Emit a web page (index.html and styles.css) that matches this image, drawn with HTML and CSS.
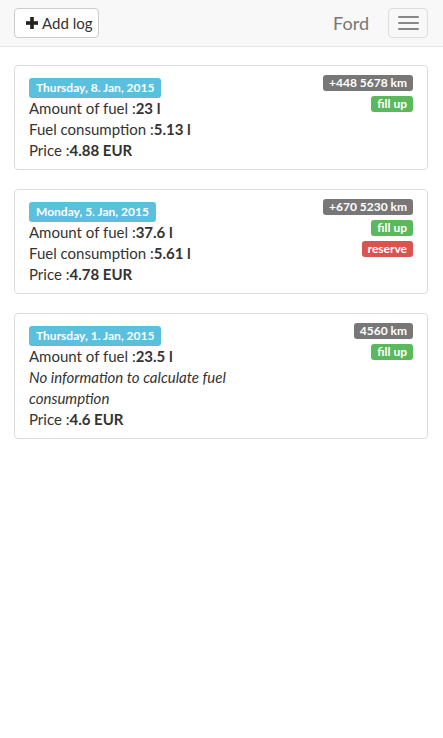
FILE: index.html
```html
<!DOCTYPE html>
<html lang="en">
<head>
    <meta charset="UTF-8">
    <meta name="viewport" content="width=device-width, initial-scale=1.0">
    <title>Fuel log - Ford</title>
    <link rel="stylesheet" href="styles.css">
</head>
<body>
    <nav class="navbar">
        <button class="btn-add" type="button">
            <svg class="icon-plus" width="12" height="12" viewBox="0 0 12 12" aria-hidden="true">
                <rect x="4.2" y="0" width="3.6" height="12" />
                <rect x="0" y="4.2" width="12" height="3.6" />
            </svg>
            Add log
        </button>
        <span class="brand">Ford</span>
        <button class="navbar-toggle" type="button" aria-label="Menu">
            <span class="icon-bar"></span>
            <span class="icon-bar"></span>
            <span class="icon-bar"></span>
        </button>
    </nav>

    <div class="logs">
        <div class="log-card">
            <div class="log-main">
                <span class="label label-date">Thursday, 8. Jan, 2015</span>
                <div class="log-line">Amount of fuel :<b>23 l</b></div>
                <div class="log-line">Fuel consumption :<b>5.13 l</b></div>
                <div class="log-line">Price :<b>4.88 EUR</b></div>
            </div>
            <div class="log-badges">
                <span class="badge badge-km">+448 5678 km</span>
                <span class="badge badge-fill">fill up</span>
            </div>
        </div>

        <div class="log-card">
            <div class="log-main">
                <span class="label label-date">Monday, 5. Jan, 2015</span>
                <div class="log-line">Amount of fuel :<b>37.6 l</b></div>
                <div class="log-line">Fuel consumption :<b>5.61 l</b></div>
                <div class="log-line">Price :<b>4.78 EUR</b></div>
            </div>
            <div class="log-badges">
                <span class="badge badge-km">+670 5230 km</span>
                <span class="badge badge-fill">fill up</span>
                <span class="badge badge-reserve">reserve</span>
            </div>
        </div>

        <div class="log-card">
            <div class="log-main">
                <span class="label label-date">Thursday, 1. Jan, 2015</span>
                <div class="log-line">Amount of fuel :<b>23.5 l</b></div>
                <div class="log-line log-note">No information to calculate fuel consumption</div>
                <div class="log-line">Price :<b>4.6 EUR</b></div>
            </div>
            <div class="log-badges">
                <span class="badge badge-km">4560 km</span>
                <span class="badge badge-fill">fill up</span>
            </div>
        </div>
    </div>
</body>
</html>
```

FILE: styles.css
```css
:root {
    --text-color: #333;
    --muted: #777;
    --info: #5bc0de;
    --success: #5cb85c;
    --danger: #d9534f;
    --border: #ddd;
}

body {
    margin: 0;
    font-family: Lato, 'Segoe UI', sans-serif;
    font-size: 15px;
    color: var(--text-color);
    background-color: white;
}

/* top bar */
.navbar {
    display: flex;
    align-items: center;
    height: 46px;
    padding: 0 15px 0 14px;
    background-color: #f8f8f8;
    border-bottom: 1px solid #e7e7e7;
}

.btn-add {
    display: flex;
    align-items: center;
    gap: 4px;
    height: 30px;
    width: 85px;
    padding: 0 0 0 11px;
    background-color: white;
    border: 1px solid #ccc;
    border-radius: 4px;
    font-family: inherit;
    font-size: 15px;
    color: var(--text-color);
}

.icon-plus {
    fill: #222;
}

.brand {
    margin-left: auto;
    margin-right: 19px;
    font-size: 18px;
    color: var(--muted);
}

.navbar-toggle {
    display: flex;
    flex-direction: column;
    justify-content: center;
    align-items: center;
    gap: 4px;
    width: 40px;
    height: 30px;
    padding: 0;
    background-color: transparent;
    border: 1px solid var(--border);
    border-radius: 4px;
}

.icon-bar {
    display: block;
    width: 21px;
    height: 2px;
    border-radius: 1px;
    background-color: #888;
}

/* log list */
.logs {
    padding: 18px 15px 0 14px;
}

.log-card {
    display: flex;
    justify-content: space-between;
    margin-bottom: 19px;
    padding: 9px 14px 8px 14px;
    border: 1px solid var(--border);
    border-radius: 4px;
}

.log-main {
    width: 246px;
    padding-top: 2px;
}

.log-line {
    line-height: 21px;
}

.log-note {
    font-style: italic;
}

.label {
    display: inline-block;
    height: 20px;
    line-height: 20px;
    padding: 0 7px;
    border-radius: 3px;
    font-size: 12px;
    font-weight: 700;
    color: white;
}

.label-date {
    background-color: var(--info);
}

.log-badges {
    display: flex;
    flex-direction: column;
    align-items: flex-end;
    gap: 5px;
}

.badge {
    height: 16px;
    line-height: 16px;
    padding: 0 6px;
    border-radius: 3px;
    font-size: 12px;
    font-weight: 700;
    color: white;
}

.badge-km {
    background-color: var(--muted);
}

.badge-fill {
    background-color: var(--success);
}

.badge-reserve {
    background-color: var(--danger);
}
```
